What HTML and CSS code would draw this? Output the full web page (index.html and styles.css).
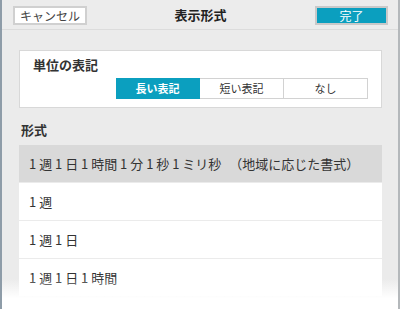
FILE: index.html
```html
<!DOCTYPE html>
<html lang="ja">
<head>
    <meta charset="UTF-8">
    <meta name="viewport" content="width=device-width, initial-scale=1.0">
    <title>表示形式</title>
    <link rel="stylesheet" href="styles.css">
</head>
<body>

    <div class="window">
        <!-- Header -->
        <div class="header">
            <div class="header-left">
                <button class="btn btn-cancel">キャンセル</button>
            </div>
            <h1 class="title">表示形式</h1>
            <div class="header-right">
                <button class="btn btn-done">完了</button>
            </div>
        </div>

        <div class="content">
            <!-- Unit notation -->
            <div class="card">
                <h2 class="card-title">単位の表記</h2>
                <div class="segmented">
                    <div class="segment active">長い表記</div>
                    <div class="segment">短い表記</div>
                    <div class="segment">なし</div>
                </div>
            </div>

            <h2 class="section-title">形式</h2>
            <ul class="format-list">
                <li class="format-row selected">1 週 1 日 1 時間 1 分 1 秒 1 ミリ秒<span class="note">（地域に応じた書式）</span></li>
                <li class="format-row">1 週</li>
                <li class="format-row">1 週 1 日</li>
                <li class="format-row">1 週 1 日 1 時間</li>
            </ul>
        </div>

        <div class="fade"></div>
    </div>

</body>
</html>
```

FILE: styles.css
```css
* {
    box-sizing: border-box;
}
body {
    margin: 0;
    font-family: "Noto Sans CJK JP", "Noto Sans", sans-serif;
    color: #333;
    background: #fff;
}
.window {
    position: relative;
    width: 400px;
    height: 309px;
    overflow: hidden;
    background: #ebebeb;
    border-left: 2px solid #8e9ca8;
    border-right: 2px solid #b4b8bb;
}
.header {
    display: grid;
    grid-template-columns: 1fr auto 1fr;
    align-items: center;
    height: 30px;
    padding: 0 10px 1px 11px;
    border-bottom: 1px solid #dcdcdc;
    background: #ececec;
}
.header-right {
    text-align: right;
}
.title {
    margin: 0;
    font-size: 13px;
    font-weight: bold;
    color: #222;
}
.btn {
    font-family: inherit;
    font-size: 12px;
    height: 19px;
    padding: 0;
    line-height: 15px;
    border: 2px solid #d0d0d0;
    cursor: pointer;
}
.btn-cancel {
    width: 74px;
    background: #fff;
    color: #444;
}
.btn-done {
    width: 73px;
    background: #0b9fbf;
    color: #fff;
    border-color: #c9c9c9;
}
.content {
    padding: 20px 16px 0 17px;
}
.card {
    background: #fff;
    border: 1px solid #d8d8d8;
    padding: 5px 13px 8px 13px;
}
.card-title {
    margin: 0;
    font-size: 13px;
    line-height: 18px;
    font-weight: bold;
}
.segmented {
    display: flex;
    justify-content: flex-end;
    margin-top: 4px;
}
.segment {
    width: 84px;
    height: 21px;
    line-height: 19px;
    text-align: center;
    font-size: 11px;
    color: #333;
    border: 1px solid #d2d2d2;
    border-left: none;
}
.segment.active {
    background: #0b9fbf;
    border-color: #0b9fbf;
    color: #fff;
    font-weight: bold;
}
.section-title {
    margin: 14px 0 7px 2px;
    font-size: 13px;
    line-height: 16px;
    font-weight: bold;
}
.format-list {
    list-style: none;
    margin: 0;
    padding: 0;
}
.format-row {
    height: 37px;
    line-height: 37px;
    padding-left: 10px;
    margin-bottom: 1px;
    font-size: 13px;
    background: #fff;
    white-space: nowrap;
}
.format-row.selected {
    background: #d9d9d9;
}
.note {
    margin-left: 8px;
}
.fade {
    position: absolute;
    left: -2px;
    right: -2px;
    bottom: 0;
    height: 30px;
    background: linear-gradient(rgba(255, 255, 255, 0), #fff 65%);
}
```
